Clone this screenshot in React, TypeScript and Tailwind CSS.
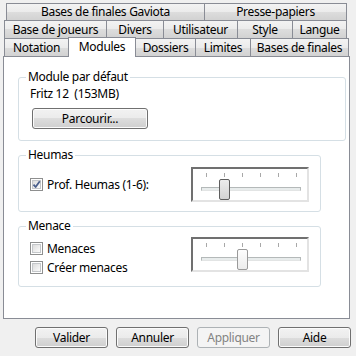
import React from 'react';

type TabDef = { label: string; cls: string; selected?: boolean };

const row1: TabDef[] = [
  { label: 'Bases de finales Gaviota', cls: 'w-[199px]' },
  { label: 'Presse-papiers', cls: 'w-[143px]' },
];

const row2: TabDef[] = [
  { label: 'Base de joueurs', cls: 'w-[103px]' },
  { label: 'Divers', cls: 'w-[58px]' },
  { label: 'Utilisateur', cls: 'w-[75px]' },
  { label: 'Style', cls: 'w-[56px]' },
  { label: 'Langue', cls: 'w-[55px]' },
];

const row3: TabDef[] = [
  { label: 'Notation', cls: 'w-[65px]' },
  { label: 'Modules', cls: 'w-[68px]', selected: true },
  { label: 'Dossiers', cls: 'w-[61px]' },
  { label: 'Limites', cls: 'w-[56px]' },
  { label: 'Bases de finales', cls: 'w-[99px]' },
];

const Tab: React.FC<{ tab: TabDef; first: boolean; height: string }> = ({ tab, first, height }) => {
  if (tab.selected) {
    return (
      <div
        className={`${tab.cls} ${first ? '' : '-ml-px'} relative z-10 -mt-px h-[20px] border-t border-l border-r border-[#898c95] bg-white flex items-start justify-center pt-[1px] text-[12px] leading-[16px] text-black`}
      >
        {tab.label}
      </div>
    );
  }
  return (
    <div
      className={`${tab.cls} ${height} ${first ? '' : '-ml-px'} relative border-t border-l border-r border-[#898c95] bg-[linear-gradient(to_bottom,#f3f3f3_0%,#ebebeb_50%,#dddddd_50%,#d2d2d2_100%)] flex items-center justify-center text-[12px] leading-[16px] text-black`}
    >
      {tab.label}
    </div>
  );
};

const TabRow: React.FC<{ tabs: TabDef[]; cls: string; height: string }> = ({ tabs, cls, height }) => (
  <div className={`flex items-start ${cls} ${height}`}>
    {tabs.map((t, i) => (
      <Tab key={t.label} tab={t} first={i === 0} height={height} />
    ))}
  </div>
);

const Checkbox: React.FC<{ checked?: boolean; label: string }> = ({ checked, label }) => (
  <label className="flex items-center gap-[4px] h-[19px]">
    <span className="w-[13px] h-[13px] border border-[#8e8f8f] bg-white p-[1px] flex">
      <span className="flex-1 border border-[#c4c7ca] bg-[linear-gradient(135deg,#dcdcdc,#fbfbfb)] relative">
        {checked && (
          <svg viewBox="0 0 9 9" className="absolute left-[-1px] top-[-1px] w-[9px] h-[9px]">
            <path d="M1.5 4.6 L3.6 7 L7.8 1.2" fill="none" stroke="#4a5f8c" strokeWidth="1.8" strokeLinejoin="round" />
          </svg>
        )}
      </span>
    </span>
    <span className="text-[12px] leading-[16px] text-black">{label}</span>
  </label>
);

const Slider: React.FC<{ value: number; disabled?: boolean }> = ({ value, disabled }) => (
  <div className="relative w-[118px] h-[35px] border-2 border-t-[#707070] border-l-[#707070] border-r-[#e3e3e3] border-b-[#e3e3e3] bg-white">
    {[0, 1, 2, 3, 4, 5].map((i) => (
      <span
        key={i}
        className="absolute top-[4px] w-px h-[4px] bg-[#a8a8a8]"
        style={{ left: 13 + 18 * i }}
      />
    ))}
    <span className="absolute left-[8px] top-[18px] w-[100px] h-[4px] border border-[#b4b9b9] border-b-[#e2e4e4] bg-[#e8ecec]" />
    <span
      className={`absolute top-[10px] w-[11px] h-[21px] rounded-[2px] border ${
        disabled
          ? 'border-[#9a9a9a] bg-[linear-gradient(to_bottom,#fdfdfd,#ececec)]'
          : 'border-[#5e5e5e] bg-[linear-gradient(to_bottom,#ececec,#d3d3d3)]'
      }`}
      style={{ left: 13 + 18 * value - 5 }}
    />
  </div>
);

const Button: React.FC<{ label: string; disabled?: boolean; wide?: string }> = ({ label, disabled, wide }) => (
  <button
    type="button"
    className={`${wide ?? 'w-[73px]'} h-[21px] rounded-[3px] border text-[12px] leading-[16px] ${
      disabled
        ? 'border-[#adb2b5] bg-[#f4f4f4] text-[#838383]'
        : 'border-[#707070] text-black bg-[linear-gradient(to_bottom,#f2f2f2_0%,#ebebeb_50%,#dddddd_50%,#cfcfcf_100%)] shadow-[inset_0_0_0_1px_#fbfbfb]'
    }`}
  >
    {label}
  </button>
);

const Legend: React.FC<{ children: React.ReactNode }> = ({ children }) => (
  <legend className="ml-[7px] px-[2px] text-[12px] leading-[16px] text-black">{children}</legend>
);

export default function App() {
  return (
    <div className="w-[356px] h-[356px] bg-[#f0f0f0] font-['Noto_Sans',sans-serif] tracking-[-0.3px] text-[12px] text-black overflow-hidden">
      {/* Tab headers */}
      <div className="pt-[3px] flex flex-col">
        <TabRow tabs={row1} cls="ml-[6px]" height="h-[17px]" />
        <TabRow tabs={row2} cls="ml-[4px]" height="h-[18px]" />
        <TabRow tabs={row3} cls="ml-[4px]" height="h-[18px]" />
      </div>

      {/* Tab page */}
      <div className="ml-[3px] w-[347px] h-[263px] border border-[#898c95] bg-white pl-[14px] pt-[12px]">
        <fieldset className="w-[328px] border border-[#d5dfe5] rounded-[3px]">
          <Legend>Module par défaut</Legend>
          <div className="pl-[11px] pt-[1px] pb-[11px]">
            <div className="leading-[16px]">Fritz 12&nbsp;&nbsp;(153MB)</div>
            <div className="mt-[6px] ml-[2px]">
              <Button label="Parcourir..." wide="w-[116px]" />
            </div>
          </div>
        </fieldset>

        <fieldset className="mt-[6px] w-[303px] border border-[#d5dfe5] rounded-[3px]">
          <Legend>Heumas</Legend>
          <div className="flex items-center justify-between pl-[11px] pr-[11px] pt-[4px] pb-[9px]">
            <Checkbox checked label="Prof. Heumas (1-6):" />
            <Slider value={1} />
          </div>
        </fieldset>

        <fieldset className="mt-[6px] w-[303px] border border-[#d5dfe5] rounded-[3px]">
          <Legend>Menace</Legend>
          <div className="flex items-start justify-between pl-[11px] pr-[11px] pt-[3px] pb-[9px]">
            <div className="flex flex-col pt-[2px]">
              <Checkbox label="Menaces" />
              <Checkbox label="Créer menaces" />
            </div>
            <Slider value={2} disabled />
          </div>
        </fieldset>
      </div>

      {/* Dialog buttons */}
      <div className="mt-[8px] pr-[5px] flex justify-end gap-[8px]">
        <Button label="Valider" />
        <Button label="Annuler" />
        <Button label="Appliquer" disabled />
        <Button label="Aide" />
      </div>
    </div>
  );
}
